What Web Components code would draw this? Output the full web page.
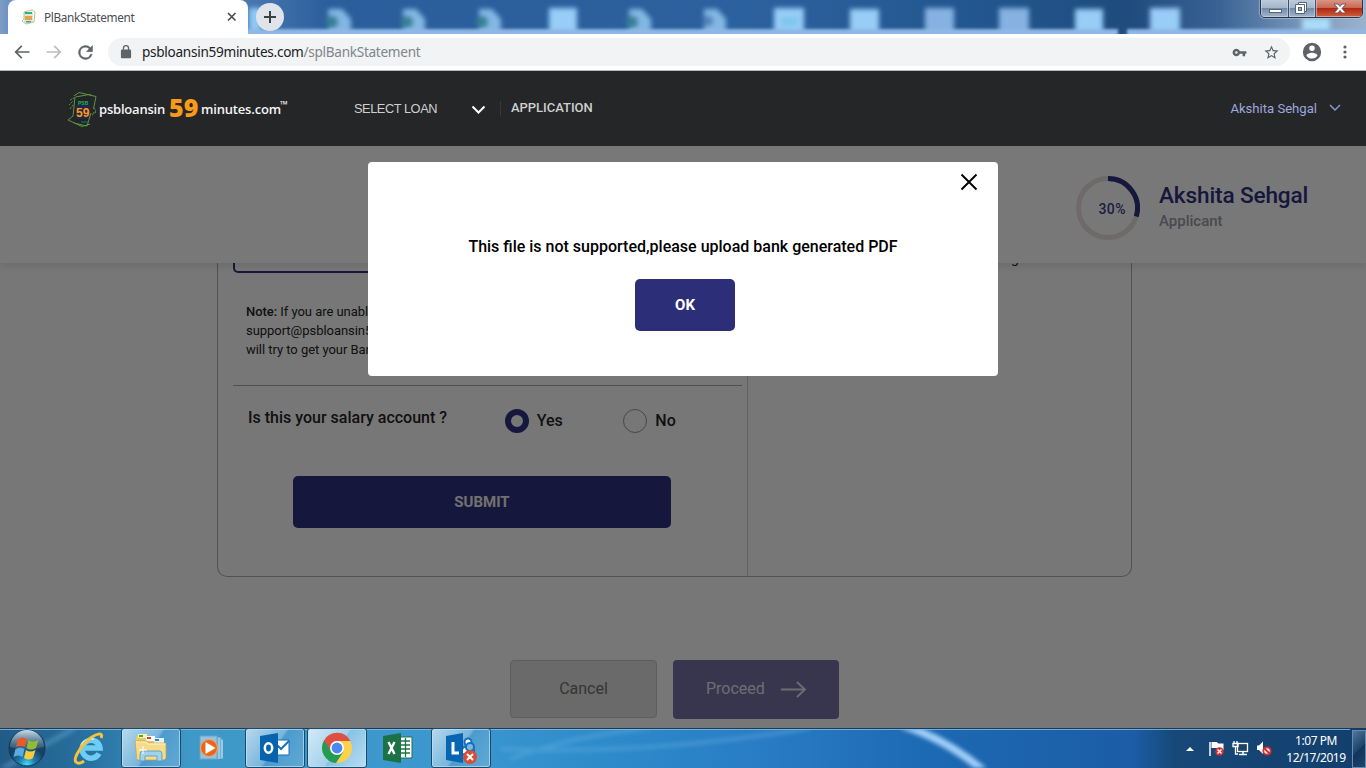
<!DOCTYPE html>
<html lang="en">
<head>
<meta charset="utf-8">
<title>PlBankStatement</title>
<style>
html,body{margin:0;height:768px;overflow:hidden;background:#fff}
body{font-family:Roboto,"Liberation Sans",sans-serif}
</style>
</head>
<body>
<desktop-screen></desktop-screen>
<script>
const define = (name, html) => customElements.define(name, class extends HTMLElement {
  constructor(){
    super();
    const t = document.createElement('template');
    t.innerHTML = html;
    this.attachShadow({mode:'open'}).append(t.content.cloneNode(true));
  }
});

define('tab-strip', `
<style>
:host{display:flex;position:relative;height:34px;overflow:hidden;background:linear-gradient(90deg,#7f9dc5 0,#6d93c4 8px,#4777ae 250px,#2a5e9c 330px,#2b619e 750px,#22558c 1000px,#1f4b7e 1130px,#3a6394 1220px,#7895b8 1300px,#9bb2cd 1366px)}
.glass{position:absolute;inset:0}
.tab{position:relative;width:240px;height:34px;margin-left:8px;background:#fff;border-radius:8px 8px 0 0;display:flex;align-items:center;font:11.800px "Noto Sans",sans-serif;color:#4a4d51;padding-left:12px;box-sizing:border-box}
.tab span{margin-left:7px;width:183px;letter-spacing:-.34px;line-height:17px}
.tab svg{display:block;flex:none}
.add{position:relative;width:28px;height:28px;margin:3px 0 0 8px;border-radius:50%;background:#dfe3ea}
.controls{position:absolute;right:3px;top:-2px;display:flex;height:20px;width:103px;box-sizing:border-box;border:1px solid #25364e;border-radius:0 0 5px 5px;overflow:hidden;box-shadow:0 0 1px 1px #b9cade88}
.controls div{box-sizing:border-box;border-right:1px solid #39506d;background:linear-gradient(#bfcddd 0,#a5b6cb 48%,#7189a7 50%,#a3b5ca 100%);box-shadow:inset 0 0 0 1px #d4deea88}
.controls svg{display:block}
.controls .close{background:linear-gradient(#d99b8c 0,#cb6a55 47%,#b02812 52%,#d15e3a 100%);border:0}
.soft{position:absolute;left:0;top:0;filter:blur(2.500px)}
.edge{position:absolute;left:0;top:0;filter:blur(1.500px)}
</style>
<svg class="soft" width="1366" height="40">
<g fill="#83b7e3"><path d="M328 9h14l9 10v17h-22zM403 9h13l9 10v17h-22zM479 9h13l9 10v17h-22zM629 9h13l9 10v17h-22zM704 9h13l9 10v17h-22z"/></g>
<g fill="#387e94"><circle cx="332" cy="22" r="6"/><circle cx="407" cy="22" r="6"/><circle cx="482" cy="22" r="6"/><circle cx="632" cy="22" r="6"/></g><circle cx="708" cy="21" r="5" fill="#507fb9"/>
<g fill="#98cdf7"><path d="M549 8h28v28h-28zM774 8h30v28h-30zM850 9h29v27h-29zM1075 9h28v27h-28zM1150 8h30v28h-30z"/></g><path fill="#86b2e2" d="M925 8h29v28h-29zM999 8h30v28h-30z"/><path fill="#a9dcf8" d="M1302 18h28v18h-28z"/><path fill="#7dc8ec" d="M781 17h17v9h-17z"/>
<path fill="#91c9f4" d="M249 8h12v28h-12z"/></svg>
<svg class="edge" width="1366" height="40"><path d="M246 29h872v11H246zM1127 29h239v11h-239z" fill="#8fb8e5"/></svg>
<div class="tab"><svg width="17" height="18" viewBox="0 0 17 18"><g fill="none" stroke="#a8cd8f"><path d="M4 4L12 2l3 2-1 10-8 2-4-3 2-2zM5 3v11h8"/></g><rect x="5" y="4" width="8" height="10" fill="#dce9d8"/><rect x="5" y="4" width="7" height="2" fill="#36ad7c"/><rect x="5" y="8" width="7" height="4" fill="#e7a04c"/><rect x="6" y="13" width="5" height="1.5" fill="#648eae"/></svg><span>PlBankStatement</span><svg width="10" height="10" viewBox="0 0 10 10"><path d="M1 1l7.500 7.500M8.500 1L1 8.500" stroke="#494c50" stroke-width="1.700"/></svg></div>
<div class="add"><svg width="28" height="28"><path d="M14 8v12M8 14h12" stroke="#3c4043" stroke-width="2"/></svg></div>
<div class="controls"><div style="width:28px"><svg width="27" height="20"><rect x="8.500" y="10.500" width="12" height="3" fill="#fff" stroke="#53657d"/></svg></div><div style="width:27px"><svg width="26" height="20"><path d="M9.500 3.500h8v9h-2v2H6.500v-9h3z" fill="#fff" stroke="#53657d"/><rect x="9.500" y="8.500" width="3" height="3" fill="#9cafc5" stroke="#53657d"/><path d="M9.500 5.500h6v7" fill="none" stroke="#53657d"/></svg></div><div class="close" style="width:48px"><svg width="47" height="20"><path d="M18 5h4l2 2.500L26 5h4l-4 4.500 4 4.500h-4l-2-2.500-2 2.500h-4l4-4.500z" fill="#fff" stroke="#615061" stroke-width=".9"/></svg></div></div>`);

define('address-bar', `
<style>
:host{display:flex;height:37px;box-sizing:border-box;background:#fff;border-bottom:1px solid #b5b6b8;align-items:center;font:13.600px "Noto Sans",sans-serif;color:#202124;padding-left:12px}
svg{display:block;flex:none}
.field{display:flex;align-items:center;width:1182px;height:28px;background:#f1f3f4;border-radius:14px;margin-left:12px;box-sizing:border-box;padding-left:11px}
.url{flex:none;width:1092px;margin-left:9px;line-height:20px;letter-spacing:-.29px;white-space:nowrap}.url i{font-style:normal;color:#80868b}
</style>
<svg width="20" height="20" viewBox="0 0 24 24" fill="#5f6368"><path d="M21 11H6.800l5.600-5.600L11 4l-8 8 8 8 1.400-1.400L6.800 13H21z"/></svg>
<svg style="margin-left:12px" width="20" height="20" viewBox="0 0 24 24" fill="#bbbdbf"><path d="M3 11h14.200l-5.600-5.600L13 4l8 8-8 8-1.400-1.400 5.600-5.600H3z"/></svg>
<svg style="margin-left:11px" width="21" height="21" viewBox="0 0 24 24" fill="#5f6368"><path d="M17.650 6.350A8 8 0 1 0 19.730 14h-2.080A6 6 0 1 1 12 6c1.660 0 3.140.69 4.220 1.780L13 11h7V4z" stroke="#5f6368" stroke-width=".5"/></svg>
<div class="field"><svg width="14" height="14" viewBox="4 1 16 22" fill="#5f6368"><path d="M18 8h-1V6a5 5 0 0 0-10 0v2H6a2 2 0 0 0-2 2v10c0 1.100.9 2 2 2h12a2 2 0 0 0 2-2V10a2 2 0 0 0-2-2zM9 6a3 3 0 0 1 6 0v2H9z"/></svg><span class="url">psbloansin59minutes.com<i>/splBankStatement</i></span>
<svg style="margin-left:-2px" width="15" height="15" viewBox="0 0 24 24" fill="#5f6368"><path d="M12.600 10A6 6 0 1 0 12.600 14H17v4h4v-4h2v-4zM7 14a2 2 0 1 1 0-4 2 2 0 0 1 0 4z"/></svg>
<svg style="margin-left:16px" width="17" height="17" viewBox="0 0 24 24" fill="#5f6368"><path d="M22 9.240l-7.190-.62L12 2 9.190 8.630 2 9.240l5.460 4.730L5.820 21 12 17.270 18.180 21l-1.630-7.030zM12 15.400l-3.760 2.270 1-4.280-3.320-2.880 4.380-.38L12 6.100l1.710 4.040 4.380.38-3.320 2.880 1 4.280z"/></svg></div>
<svg style="margin-left:11px" width="22" height="22" viewBox="0 0 24 24" fill="#5f6368"><path d="M12 2a10 10 0 1 0 0 20 10 10 0 0 0 0-20zm0 3a3 3 0 1 1 0 6 3 3 0 0 1 0-6zm0 14.200a7.200 7.200 0 0 1-6-3.220c.03-1.990 4-3.080 6-3.080s5.970 1.090 6 3.080a7.200 7.200 0 0 1-6 3.220z"/></svg>
<svg style="margin-left:19px" width="6" height="18" fill="#5f6368"><circle cx="3" cy="4" r="1.600"/><circle cx="3" cy="9" r="1.600"/><circle cx="3" cy="14" r="1.600"/></svg>`);

define('brand-logo', `
<style>
:host{display:flex;width:225px;height:40px;color:#f4f4f4;font:600 13px/40px "Open Sans",sans-serif;align-items:center;white-space:nowrap}
svg{display:block;flex:none}
.a{width:70px;margin-left:1px;letter-spacing:-.2px}.n{font-size:25px;font-weight:800;color:#f89b1b;width:32px;line-height:36px;margin-top:-3px}.m{letter-spacing:-.18px}.tm{font-size:10px;font-weight:700;align-self:flex-start;line-height:31px;margin-left:-1px}
</style>
<svg width="32" height="40" viewBox="0 0 32 40"><rect x="9" y="8" width="15" height="27" rx="1" fill="#202327"/><rect x="10" y="16" width="14" height="14" fill="#25274a"/><g fill="none" stroke="#5d9444" stroke-width="1"><path d="M8 7L13 3.500l17 4L27.500 20M9.500 8L23 5.500l3 1M9 8L7 27l-5 4 14 6.500 8-2.500M25 24l-4 13L8 34"/><path d="M4 11l4-2M3 16l4-4M4 20l3-4M28 19l2 3-3 2M26 26l4-3" stroke-dasharray="2 1"/></g><text x="12" y="15.500" font-family="Liberation Sans" font-size="5" font-weight="700" fill="#20b568">PSB</text><text x="10" y="27.500" font-family="Liberation Sans" font-size="12" font-weight="700" fill="#f89b1b">59</text><path d="M15 33h7" stroke="#177b63"/></svg>
<span class="a">psbloansin</span><span class="n">59</span><span class="m">minutes.com</span><span class="tm">™</span>`);

define('site-header', `
<style>
:host{display:flex;height:75px;background:#252628;align-items:center;color:#cfcfcf;font:12.800px "Liberation Sans",sans-serif;box-sizing:border-box;padding:0 25px 0 66px}
svg{display:block}
.sel{margin-left:63px;width:117px;letter-spacing:-.45px}
.app{font:500 13px Roboto;margin-left:10px;letter-spacing:-.03px;padding-bottom:2px}
.div{height:15px;border-left:1px solid #36383b;margin-left:14px}
.user{margin-left:auto;font:13.100px Roboto;color:#9fa8dd;display:flex;align-items:center;padding-bottom:1px}.user svg{margin-left:12px}
</style>
<brand-logo></brand-logo><span class="sel">SELECT LOAN</span><svg width="15" height="10" style="margin-top:3px"><path d="M1.500 1.500L7.500 7.500 13.500 1.500" fill="none" stroke="#fff" stroke-width="2"/></svg><span class="div"></span><span class="app">APPLICATION</span>
<span class="user">Akshita Sehgal<svg width="12" height="8"><path d="M1 1l5 5 5-5" fill="none" stroke="#8d99d8" stroke-width="1.400"/></svg></span>`);

define('progress-ring', `
<style>:host{display:block;width:64px;height:64px}svg{display:block}</style>
<svg width="64" height="64"><circle cx="32" cy="32" r="29.500" fill="none" stroke="#dcd5d2" stroke-width="5"/><path d="M32 2.500A29.500 29.500 0 0 1 60.200 40.600" fill="none" stroke="#2d2e78" stroke-width="5"/><text x="36" y="38" font-family="Roboto" font-size="14" font-weight="500" fill="#3c3d7c" text-anchor="middle" textLength="27">30%</text></svg>`);

define('applicant-bar', `
<style>
:host{display:flex;position:relative;height:117px;background:#f0f0f0;box-shadow:0 3px 8px #0000001c;box-sizing:border-box;padding:30px 58px 0 0;justify-content:flex-end;gap:19px}
.who{width:149px;white-space:nowrap}
.name{font:500 22.600px/27px Roboto;color:#2d2e78;margin-top:6px;letter-spacing:-.14px}
.role{font:500 15px/18px Roboto;color:#92949d;margin-top:3px;letter-spacing:0}
</style>
<progress-ring></progress-ring><div class="who"><div class="name">Akshita Sehgal</div><div class="role">Applicant</div></div>`);

define('radio-option', `
<style>
:host{display:flex;align-items:center;font:500 16px/24px Roboto;color:#222}
.dot{width:24px;height:24px;border-radius:50%;box-sizing:border-box;border:1px solid #909090;margin-right:8px}
:host([checked]) .dot{border:6px solid #2d2e78}
</style><span class="dot"></span><slot></slot>`);

define('app-button', `
<style>:host{display:flex;align-items:center;justify-content:center;height:52px;border-radius:5px;background:#2d2e78;color:#fff;font:700 15px Roboto}</style><slot></slot>`);

define('statement-form', `
<style>
:host{display:grid;grid-template-columns:530px 1fr;width:915px;height:314px;margin-left:217px;box-sizing:border-box;border:1px solid #a4a4a4;border-top:0;border-radius:0 0 10px 10px;color:#222}
.left{border-right:1px solid #c4c4c4;padding:0 5px 0 15px}
.input{height:9.500px;border:2px solid #2d2e78;border-top:0;border-radius:0 0 5px 5px;box-sizing:border-box;width:509px}
.note{font:13px/19px Roboto;margin:29px 0 0 13px;height:75px;width:400px;white-space:nowrap;letter-spacing:-.04px}
.note b{font-weight:500}
hr{margin:8px 0 0;border:0;border-top:1px solid #a1a1a1}
.row{display:flex;margin:22px 0 0 15px;font:500 16px/20px Roboto;height:28px}
.row .q{width:257.500px}.row radio-option{width:119px;height:26px}
app-button{width:378px;margin:40px 0 0 60px;color:#e2e2e2}
.right{font:14px/17px Roboto}
.right span{display:block;margin:-13.500px 0 0 263px}
</style>
<div class="left"><div class="input"></div><div class="note"><b>Note:</b> If you are unable<br>support@psbloansin59<br>will try to get your Bank</div><hr><div class="row"><span class="q">Is this your salary account ?</span><radio-option checked>Yes</radio-option><radio-option>No</radio-option></div><app-button>SUBMIT</app-button></div>
<div class="right"><span>g</span></div>`);

define('message-dialog', `
<style>
:host{display:flex;flex-direction:column;align-items:center;width:630px;height:214px;border-radius:4px;background:#fff;color:#000}
.x{align-self:flex-end;margin:11px 20px 0 0;height:18px}.x svg{display:block}
p{font:500 16px/20px Roboto;margin:46px 0 22px;letter-spacing:0;white-space:nowrap}
app-button{width:100px;margin-left:4px;height:52px}
</style>
<div class="x"><svg width="18" height="18"><path d="M1.500 1.500l15 15M16.500 1.500l-15 15" stroke="#000" stroke-width="1.900"/></svg></div><p>This file is not supported,please upload bank generated PDF</p><app-button>OK</app-button>`);

define('loan-page', `
<style>
:host{display:block;position:relative;height:582px;background:#efefef;overflow:hidden}
.actions{display:flex;gap:16px;margin:83px 0 0 510px;font:16px Roboto}
.actions div{box-sizing:border-box;border-radius:4px;display:flex;align-items:center}
.cancel{width:147px;height:58px;border:1px solid #bababa;background:#d5d5d5;color:#6b6b6b;justify-content:center;padding-bottom:2px}
.proceed{width:166px;height:59px;background:#706d9f;color:#dad9e2;padding:0 0 2px 33px}
.proceed svg{margin:2px 0 0 15px}
.shade{position:absolute;inset:0;background:#00000080;display:flex;justify-content:center;align-items:flex-start;padding-top:16px;box-sizing:border-box}
</style>
<applicant-bar></applicant-bar><statement-form></statement-form>
<div class="actions"><div class="cancel">Cancel</div><div class="proceed">Proceed<svg width="27" height="17"><path d="M1 8.500h24M17 1l8 7.500-8 7.500" fill="none" stroke="#dad9e2" stroke-width="1.800"/></svg></div></div>
<div class="shade"><message-dialog></message-dialog></div>`);

define('task-button', `
<style>
:host{display:flex;width:60px;height:40px;align-items:center;justify-content:center;box-sizing:border-box}
:host([open]){border:1px solid #194b70;border-radius:3px;box-shadow:inset 0 0 0 1px #c4e1f2aa;background:linear-gradient(125deg,#b6d9ed 0,#79b6dc 48%,#4d9bcd 52%,#60a9d5 100%)}
:host([active]){background:linear-gradient(125deg,#d4eaf7,#a4d1ec 50%,#88c2e4 52%,#b8def3)}
</style><slot></slot>`);

define('task-bar', `
<style>
:host{display:flex;position:relative;height:40px;overflow:hidden;color:#fff;box-sizing:border-box}
.bg{position:absolute;inset:0}
.apps,.tray{position:relative;display:flex}
.apps{width:491px}.apps svg,.tray svg{display:block}
.tray{margin-left:auto;align-items:center}
.clock{font:12px/17px "Noto Sans",sans-serif;text-align:center;width:60px;margin-left:13px;white-space:nowrap;letter-spacing:-.45px;padding-top:2px}
.peek{width:14px;height:38px;margin-left:6px;margin-top:1px;border:1px solid #6a8aab;box-sizing:border-box;background:linear-gradient(135deg,#52779c,#1c436d 50%,#12355c 52%,#1b456f)}
</style>
<svg class="bg" width="1366" height="40"><defs><linearGradient id="g"><stop stop-color="#215b86"/><stop offset=".06" stop-color="#276f9f"/><stop offset=".14" stop-color="#3f99c7"/><stop offset=".33" stop-color="#3b98cf"/><stop offset=".43" stop-color="#2f8ccb"/><stop offset=".56" stop-color="#287cc4"/><stop offset=".68" stop-color="#1d69b3"/><stop offset=".83" stop-color="#1b5da6"/><stop offset=".86" stop-color="#174877"/><stop offset="1" stop-color="#123f6d"/></linearGradient></defs><rect width="1366" height="40" fill="url(#g)"/></svg>
<svg class="bg" style="filter:blur(2px)" width="1366" height="40"><g fill="none"><path d="M0 42L75 0" stroke="#6cabd1" stroke-width="5" opacity=".45"/><path d="M510 31Q570 8 650 0M500 21Q650 27 810 0" stroke="#61afe1" stroke-width="4" opacity=".45"/><path d="M902-3Q948 12 985 44" stroke="#a0cff8" stroke-width="8"/></g></svg>
<svg class="bg" width="1366" height="40"><path d="M0 .5h1366" stroke="#153c5c"/><path d="M0 1.500h1350" stroke="#8dbddd" opacity=".8"/></svg>
<div class="apps">
<svg width="54" height="40"><defs><radialGradient id="o" cx=".5" cy=".95"><stop stop-color="#48dbf4"/><stop offset=".45" stop-color="#1d7eaf"/><stop offset="1" stop-color="#184163"/></radialGradient><linearGradient id="h" x2="0" y2="1"><stop stop-color="#cbdde7"/><stop offset="1" stop-color="#7c9fb8" stop-opacity=".2"/></linearGradient></defs><circle cx="27" cy="20" r="18" fill="url(#o)" stroke="#143852"/><path d="M10 19A17 17 0 0 1 44 19Q27 24 10 19" fill="url(#h)"/><path d="M18 11q5-3 9 0l-2 8q-5-2-9 0z" fill="#e95b27"/><path d="M28.500 12q4 3 10 0l-2.500 8q-5 3-9.500 0z" fill="#91bd35"/><path d="M15.500 21q5-3 9 0l-2 8q-4-3-9 0z" fill="#5babe5"/><path d="M26 22q4 3 9.500 0l-2.500 8q-4 3-9 0z" fill="#fbca3a"/></svg>
<task-button style="margin-left:5px"><svg width="34" height="34"><path d="M27 22.500A9 9 0 1 1 28 17H12" fill="none" stroke="#6dcdf5" stroke-width="5.500"/><path d="M9 14q5-7 13-6" fill="none" stroke="#c8f1ff" stroke-width="1.500"/><path d="M29 7c3-6-5-5-13 2S1 28 4 31s8-1 8-1" fill="none" stroke="#f2c33b" stroke-width="3"/></svg></task-button>
<task-button open style="margin-left:2px"><svg width="34" height="30"><path d="M2 3h10l3 3h15v20H2z" fill="#e9c967"/><path d="M4 1h9v4H4z" fill="#fff1a9"/><path d="M12 3h9v5h-9z" fill="#fff"/><path d="M20 5h10v7H20z" fill="#e6f2fa"/><path d="M5 2h4v2H5z" fill="#42ab43"/><path d="M13 4h4v2h-4z" fill="#d64231"/><path d="M21 6h4v2h-4z" fill="#298bd0"/><path d="M1 8h12l2 2h17v15l-2 2H3z" fill="#f4dc8b" stroke="#c39d47" stroke-width=".7"/><path d="M2 9h10l2 2h17" stroke="#fff4bd" fill="none"/><path d="M6 28v-7q0-3 3-3h16q3 0 3 3v7h-5v-5H11v5z" fill="#9fd3ee" stroke="#5297c1" stroke-width=".8"/><path d="M9 13v8M5 17h8" stroke="#fff"/></svg></task-button>
<task-button><svg width="34" height="30"><path d="M8 4h18l3 3v19H8z" fill="#76b2d5"/><path d="M25 5v21M28 7v18" stroke="#c1dcea"/><rect x="6" y="3" width="17" height="23" fill="#92c2df" stroke="#68a4cb"/><circle cx="15" cy="15" r="8.500" fill="#e9691c" stroke="#f7a56b"/><path d="M11.500 9l10 6-10 6z" fill="#fff"/></svg></task-button>
<task-button open style="margin-left:4px"><svg width="34" height="32"><path d="M15 8h16v15H15z" fill="#fff" stroke="#1571ba"/><path d="M16 10l7 7 8-8" fill="none" stroke="#1571ba" stroke-width="2"/><path d="M2 4l18-3v30L2 28z" fill="#0763ae"/><ellipse cx="10.500" cy="16" rx="3.700" ry="4.700" fill="none" stroke="#fff" stroke-width="2.500"/></svg></task-button>
<task-button open active style="margin-left:2px"><svg width="32" height="32" viewBox="0 0 32 32"><circle cx="16" cy="16" r="15" fill="#fbd24c"/><path d="M16 16L3 8.500A15 15 0 0 0 15 31l7.500-11.500z" fill="#249b54"/><path d="M3 8.500A15 15 0 0 1 29.500 9H16a7 7 0 0 0-6.500 9z" fill="#dd5144"/><circle cx="16" cy="16" r="7" fill="#fff"/><circle cx="16" cy="16" r="5.400" fill="#4888ef"/></svg></task-button>
<task-button style="margin-left:1px"><svg width="34" height="32"><path d="M16 5h15v21H16z" fill="#fff" stroke="#1d7345"/><path d="M18 9h11M18 13h11M18 17h11M18 21h11M24.500 6v19" stroke="#1d7345" stroke-width="1.300"/><path d="M2 4l18-3v30L2 28z" fill="#1d7245"/><path d="M7.500 10l6 12M13.500 10l-6 12" stroke="#fff" stroke-width="2.400"/></svg></task-button>
<task-button open style="margin-left:3px"><svg width="36" height="34"><circle cx="25" cy="11" r="3.500" fill="#fff" stroke="#1670bd" stroke-width="2"/><path d="M18 23v-4q6-8 13 0v5z" fill="#fff" stroke="#1670bd" stroke-width="2"/><circle cx="27" cy="16" r="4" fill="#78b8e4" stroke="#1670bd" stroke-width="2"/><path d="M3 5l17-3v30L3 29z" fill="#0766b3"/><path d="M10 11v11h6" fill="none" stroke="#fff" stroke-width="3"/><circle cx="27" cy="26" r="7" fill="#d64e34"/><path d="M24 23l6 6M30 23l-6 6" stroke="#fff" stroke-width="2"/></svg></task-button>
</div>
<div class="tray">
<svg width="10" height="8" style="margin-right:13px;margin-top:2px"><path d="M1 6l4-4 4 4z" fill="#fff"/></svg>
<svg width="18" height="18"><path d="M2 3v14" stroke="#fff" stroke-width="1.500"/><path d="M3.500 3h5l2 1.500h5V11h-5L8.500 9h-5z" fill="#fff"/><circle cx="11.500" cy="12.500" r="4.300" fill="#d82c2e"/><path d="M9.500 10.500l4 4M13.500 10.500l-4 4" stroke="#fff" stroke-width="1.400"/></svg>
<svg width="18" height="18" style="margin-left:6px"><rect x="5.500" y="4.500" width="10" height="8" fill="#1d4265" stroke="#fff" stroke-width="1.300"/><path d="M7 15.500h8M11 13v3" stroke="#fff" stroke-width="1.500"/><path d="M1 4.500h5v3H1zM2 2v3M5 2v3M3.500 8v7H6" fill="none" stroke="#fff" stroke-width="1.300"/></svg>
<svg width="17" height="18" style="margin-left:6px"><path d="M1 6.500h2l4-4v12.500l-4-4H1z" fill="#fff"/><circle cx="11" cy="12" r="3.700" fill="#eee" stroke="#d82c2e" stroke-width="1.800"/><path d="M8.500 9.500l5 5" stroke="#d82c2e" stroke-width="1.800"/></svg>
<div class="clock">1:07 PM<br>12/17/2019</div><div class="peek"></div>
</div>`);

define('desktop-screen', `
<style>:host{display:grid;grid-template-rows:34px 37px 75px 582px 40px;width:1366px;height:768px;overflow:hidden}</style>
<tab-strip></tab-strip><address-bar></address-bar><site-header></site-header><loan-page></loan-page><task-bar></task-bar>`);
</script>
</body>
</html>
